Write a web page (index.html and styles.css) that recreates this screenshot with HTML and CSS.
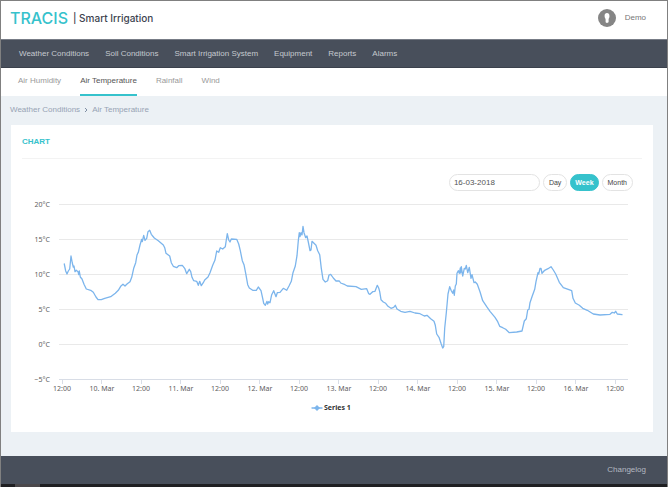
FILE: index.html
```html
<!DOCTYPE html>
<html lang="en">
<head>
    <meta charset="UTF-8">
    <meta name="viewport" content="width=device-width, initial-scale=1.0">
    <title>TRACIS | Smart Irrigation</title>
    <link rel="stylesheet" href="styles.css">
</head>
<body>
    <div class="page">

        <header class="app-header">
            <a class="brand" href="#">
                <span class="brand-name">TRACIS</span>
                <span class="brand-sub">| Smart Irrigation</span>
            </a>
            <a class="user" href="#">
                <svg class="avatar" viewBox="0 0 18 18" aria-hidden="true">
                    <circle cx="9" cy="9" r="9" fill="#858585"/>
                    <path d="M9 4c1.500 0 2.400 1 2.400 2.400 0 .8.200 1.600-.2 2.400-.3.700-.6 1-.6 1.800v2.200c0 .7-.7 1.200-1.600 1.200s-1.400-.5-1.400-1.200v-2.200c0-.8-.4-1.100-.7-1.800-.3-.8-.3-1.600-.3-2.400C6.600 5 7.500 4 9 4z" fill="#fff"/>
                </svg>
                <span>Demo</span>
            </a>
        </header>

        <nav class="main-nav">
            <a href="#">Weather Conditions</a>
            <a href="#">Soil Conditions</a>
            <a href="#">Smart Irrigation System</a>
            <a href="#">Equipment</a>
            <a href="#">Reports</a>
            <a href="#">Alarms</a>
        </nav>

        <nav class="sub-nav">
            <a href="#">Air Humidity</a>
            <a href="#" class="active">Air Temperature</a>
            <a href="#">Rainfall</a>
            <a href="#">Wind</a>
        </nav>

        <main class="content">
            <div class="breadcrumb">
                <a href="#">Weather Conditions</a>
                <svg class="crumb-arrow" viewBox="0 0 4 6" aria-hidden="true"><path d="M1 1l2 2-2 2" fill="none" stroke="#7f8fa4" stroke-width="1"/></svg>
                <a href="#">Air Temperature</a>
            </div>

            <section class="card">
                <h2 class="card-title">CHART</h2>

                <div class="toolbar">
                    <input type="text" class="date-input" value="16-03-2018" aria-label="Date">
                    <button type="button" class="btn">Day</button>
                    <button type="button" class="btn btn-active">Week</button>
                    <button type="button" class="btn">Month</button>
                </div>

                <svg class="chart" viewBox="22 196 620 218" role="img" aria-label="Air temperature, Series 1">
                    <path class="grid" d="M59 204.500H628M59 239.500H628M59 274.500H628M59 309.500H628M59 344.500H628"/>
                    <path class="axis" d="M59 379.500H628M62.500 380v4M101.500 380v4M141.500 380v4M180.500 380v4M220.500 380v4M259.500 380v4M299.500 380v4M338.500 380v4M378.500 380v4M417.500 380v4M457.500 380v4M496.500 380v4M536.500 380v4M575.500 380v4M615.500 380v4"/>
                    <g class="label label-y">
                        <text x="50" y="207">20°C</text>
                        <text x="50" y="242">15°C</text>
                        <text x="50" y="277">10°C</text>
                        <text x="50" y="312">5°C</text>
                        <text x="50" y="347">0°C</text>
                        <text x="50" y="382">−5°C</text>
                    </g>
                    <g class="label label-x">
                        <text x="62" y="391">12:00</text>
                        <text x="102" y="391">10. Mar</text>
                        <text x="141" y="391">12:00</text>
                        <text x="181" y="391">11. Mar</text>
                        <text x="220" y="391">12:00</text>
                        <text x="260" y="391">12. Mar</text>
                        <text x="299" y="391">12:00</text>
                        <text x="339" y="391">13. Mar</text>
                        <text x="378" y="391">12:00</text>
                        <text x="418" y="391">14. Mar</text>
                        <text x="457" y="391">12:00</text>
                        <text x="497" y="391">15. Mar</text>
                        <text x="536" y="391">12:00</text>
                        <text x="576" y="391">16. Mar</text>
                        <text x="615" y="391">12:00</text>
                    </g>
                    <polyline class="series" points="
                        64.3,264 65.7,271 67,274 68.3,271 69.7,269 70.3,263 71,256 72.3,263 73.3,267 74,266 75,271.7 76.3,270.3 78,271.7 78.7,274.7 79.3,271 80.3,277
                        82,279 84,284.3 86.3,289 90.7,290.3 93.3,292.3 96,297 98,299.7 101.3,299.7 104.7,298.3 110.7,296.7 115.3,293.3 118.3,290.3 120.7,286.3 123,284.3
                        125,286 127.3,283.7 130,281.7 131.7,277.3 133.7,268.3 135.7,262.7 137,255 138.3,252.3 140,245 141.7,239.3 142.3,241.7 143.7,235.3 145,240.3
                        146.7,238.3 148,231.7 149.7,230.3 151.3,234.3 154.3,238 158.3,240.7 163.3,245 164.7,247.7 166,253.3 169.7,256 171.3,262.7 173.3,266.3 176.7,267.7
                        178.7,265.7 182.3,265.3 184.7,268.3 186.7,273.7 189.3,269.3 190.7,271.7 192,277.3 193.7,280.7 196.7,281.3 198.3,285.3 199.7,281.3 201.3,285.7
                        203.3,282.7 204.7,280 208,277 210,272.7 212.7,265.3 215,260 216.7,251 218.7,252.3 220.3,247.7 222.7,249 225.3,246.7 226.3,240 227.3,233.7
                        228.7,240 230,242 231.3,239 236.7,239.3 238.7,244 240.3,250.7 242.3,260.7 244,264.7 245.7,273.3 247.7,284.7 249.3,288 252.7,290.3 256.3,290.3
                        258.3,287 261,290.7 262.7,298.3 263.7,303.3 265.3,305.3 267,301.3 267.7,304 268.7,301.7 270,302.7 271.7,294.7 273.7,290.7 276,296.7 277.3,292.7
                        280,292.3 283.3,288.3 286.7,290.3 289,286 291.3,281.3 293,272.7 295.3,266 297,255.7 298.3,240.7 299.3,232.7 300,236.7 301,232.7 302,235
                        303,226.3 304,232.7 305.7,237.7 307,236 308.3,242 310,250.7 311,250 312,241.3 314,243.3 316,245.3 317.7,250.7 319.7,254.7 321.3,268.3
                        323,279.3 325.3,282 327.7,280.7 329,275 330.7,274.3 333.3,278 336,281 339.3,281 340.7,283 345,284.7 347.3,286 356,286.7 361.3,289.3
                        366.7,288.7 368.7,293.7 370,294.3 372.7,291.7 375,291.3 377.3,285.3 378.7,288 379.7,291.7 381,299.7 383.3,302 385.7,303.3 388,306.3
                        391,308.3 393.7,307.3 395.3,305.3 397,309 400.7,311.3 405,312.3 410,311.3 415,313 420,313.7 424.3,316 427,315.3 430.7,318.7 434,321.3
                        435.3,325.3 436.7,334 439,337.3 441,343.3 442.7,348 443.7,346.7 444.7,328.3 446.3,312.7 448,294 449.7,286.7 451.3,290.7 452.7,293.3
                        453.7,290 454.3,295.3 455.3,286 456.3,284 457,273.3 458.3,270.7 459.3,273.3 460.3,268 460.7,273 461.3,266.7 462.7,276 464.3,268.3 465.3,269
                        466.3,265.3 467.7,272.7 469.3,267.3 471,278.3 472,274.7 474,282.7 475.3,282 477.3,284.3 480,291.7 482.7,300.7 486.7,306.7 490,311.3
                        495,317.3 497.7,321.7 499.7,326.3 502.7,327.7 505.7,329.3 509.3,332.7 516.7,332 522,331 523.3,325.3 524.3,321 526.3,318.7 527.7,310
                        529,309.3 530,302.7 532,296.7 534.7,289.3 536,281.7 538,272.7 538.7,274 540,268.3 541,268.3 542,273.3 544.7,270.3 548,268.7 551,266.7
                        553.3,270 555.7,274 559.3,282.3 563.3,287.7 571.7,290.7 573,298.3 575.3,303 579.3,305.3 582.7,308.3 587.3,310.3 593.3,314 600,315
                        610,314.3 612.3,312.3 614.3,313 615.7,311.3 617.3,314 622,314.7"/>
                    <g class="legend">
                        <path class="series" d="M312 408H322"/>
                        <path d="M317 405l3 3-3 3-3-3z" fill="#7cb5ec"/>
                        <text x="324" y="410">Series 1</text>
                    </g>
                </svg>
            </section>
        </main>

        <footer class="app-footer">
            <a href="#">Changelog</a>
        </footer>
        <div class="bottom-strip"></div>
    </div>
</body>
</html>
```

FILE: styles.css
```css
:root { --primary: #36c2cc; --dark: #484f5b; --bg: #ecf1f5; --frame: #808080; --muted: #999; }
* { box-sizing: border-box; font-family: "Liberation Sans", Arial, sans-serif; }

body { margin: 0; background: var(--bg); font-size: 8px; line-height: 12px; }
a { color: inherit; text-decoration: none; }

.page { min-height: 100vh; display: flex; flex-direction: column; border: 1px solid var(--frame); border-bottom: 0; }

/* HEADER */
.app-header { height: 38px; background: white; display: flex; align-items: center; justify-content: space-between; padding: 0 21px 4px 9px; }
.brand { display: flex; align-items: center; gap: 5px; }
.brand-name, .brand-sub { font-family: Inter, sans-serif; font-weight: 500; }
.brand-name { font-size: 16px; line-height: 20px; color: var(--primary); }
.brand-sub { font-size: 10px; color: #3c434f; }
.user { display: flex; align-items: center; gap: 9px; color: #777; }
.avatar { width: 18px; height: 18px; }

/* NAVIGATION */
.main-nav, .sub-nav { display: flex; align-items: center; }
.main-nav { height: 29px; padding: 0 18px; gap: 16px; background: var(--dark); color: #c5c9cf; border-top: 1px solid #777c86; border-bottom: 1px solid #3b414c; }
.sub-nav { height: 28px; padding: 0 17px; gap: 19px; background: white; color: var(--muted); }
.sub-nav a { height: 28px; line-height: 25px; border-bottom: 2px solid transparent; }
.sub-nav .active { color: #555; border-color: var(--primary); }

/* CONTENT */
.content { flex: 1; padding: 8px 14px 24px 10px; }
.breadcrumb { display: flex; align-items: center; gap: 4px; color: #97a3b4; }
.breadcrumb a:first-child { margin-left: -1px; }
.crumb-arrow { width: 4px; height: 6px; }
.card { margin-top: 9px; padding: 11px 11px 18px; background: white; }
.card-title { margin: 0; padding-bottom: 10px; font-size: 8px; line-height: 12px; color: var(--primary); border-bottom: 1px solid #f3f3f3; }

/* TOOLBAR */
.toolbar { display: flex; justify-content: flex-end; gap: 3px; padding: 15px 9px 5px 0; }
.date-input, .btn { height: 17px; border: 1px solid #e3e3e3; border-radius: 9px; background: white; color: #555; }
.date-input { width: 91px; padding: 0 4px; font-size: 8px; }
.btn { padding: 0 5px; font-size: 7px; color: #444; cursor: pointer; }
.btn-active { padding: 0 4px; background: var(--primary); border-color: var(--primary); color: white; font-weight: 700; }

/* CHART */
.chart { display: block; width: 100%; }
.grid, .axis { fill: none; stroke: #e9e9e9; stroke-width: 1; }
.axis { stroke: #d8dde6; }
.series { fill: none; stroke: #7cb5ec; stroke-width: 1.3; stroke-linejoin: round; stroke-linecap: round; }
.chart text { font-family: "Noto Sans", sans-serif; font-size: 7px; }
.label { fill: #606060; }
.label-y { text-anchor: end; }
.label-x { text-anchor: middle; }
.legend text { fill: #333; font-weight: 700; }

/* FOOTER */
.app-footer { height: 28px; background: var(--dark); color: #b4b9c1; display: flex; align-items: center; justify-content: flex-end; padding: 0 21px; }
.bottom-strip { height: 3px; background: linear-gradient(to right, #1f1f22 14px, #4b484b 14px, #4b484b 39px, #1f1f22 39px); }
```
